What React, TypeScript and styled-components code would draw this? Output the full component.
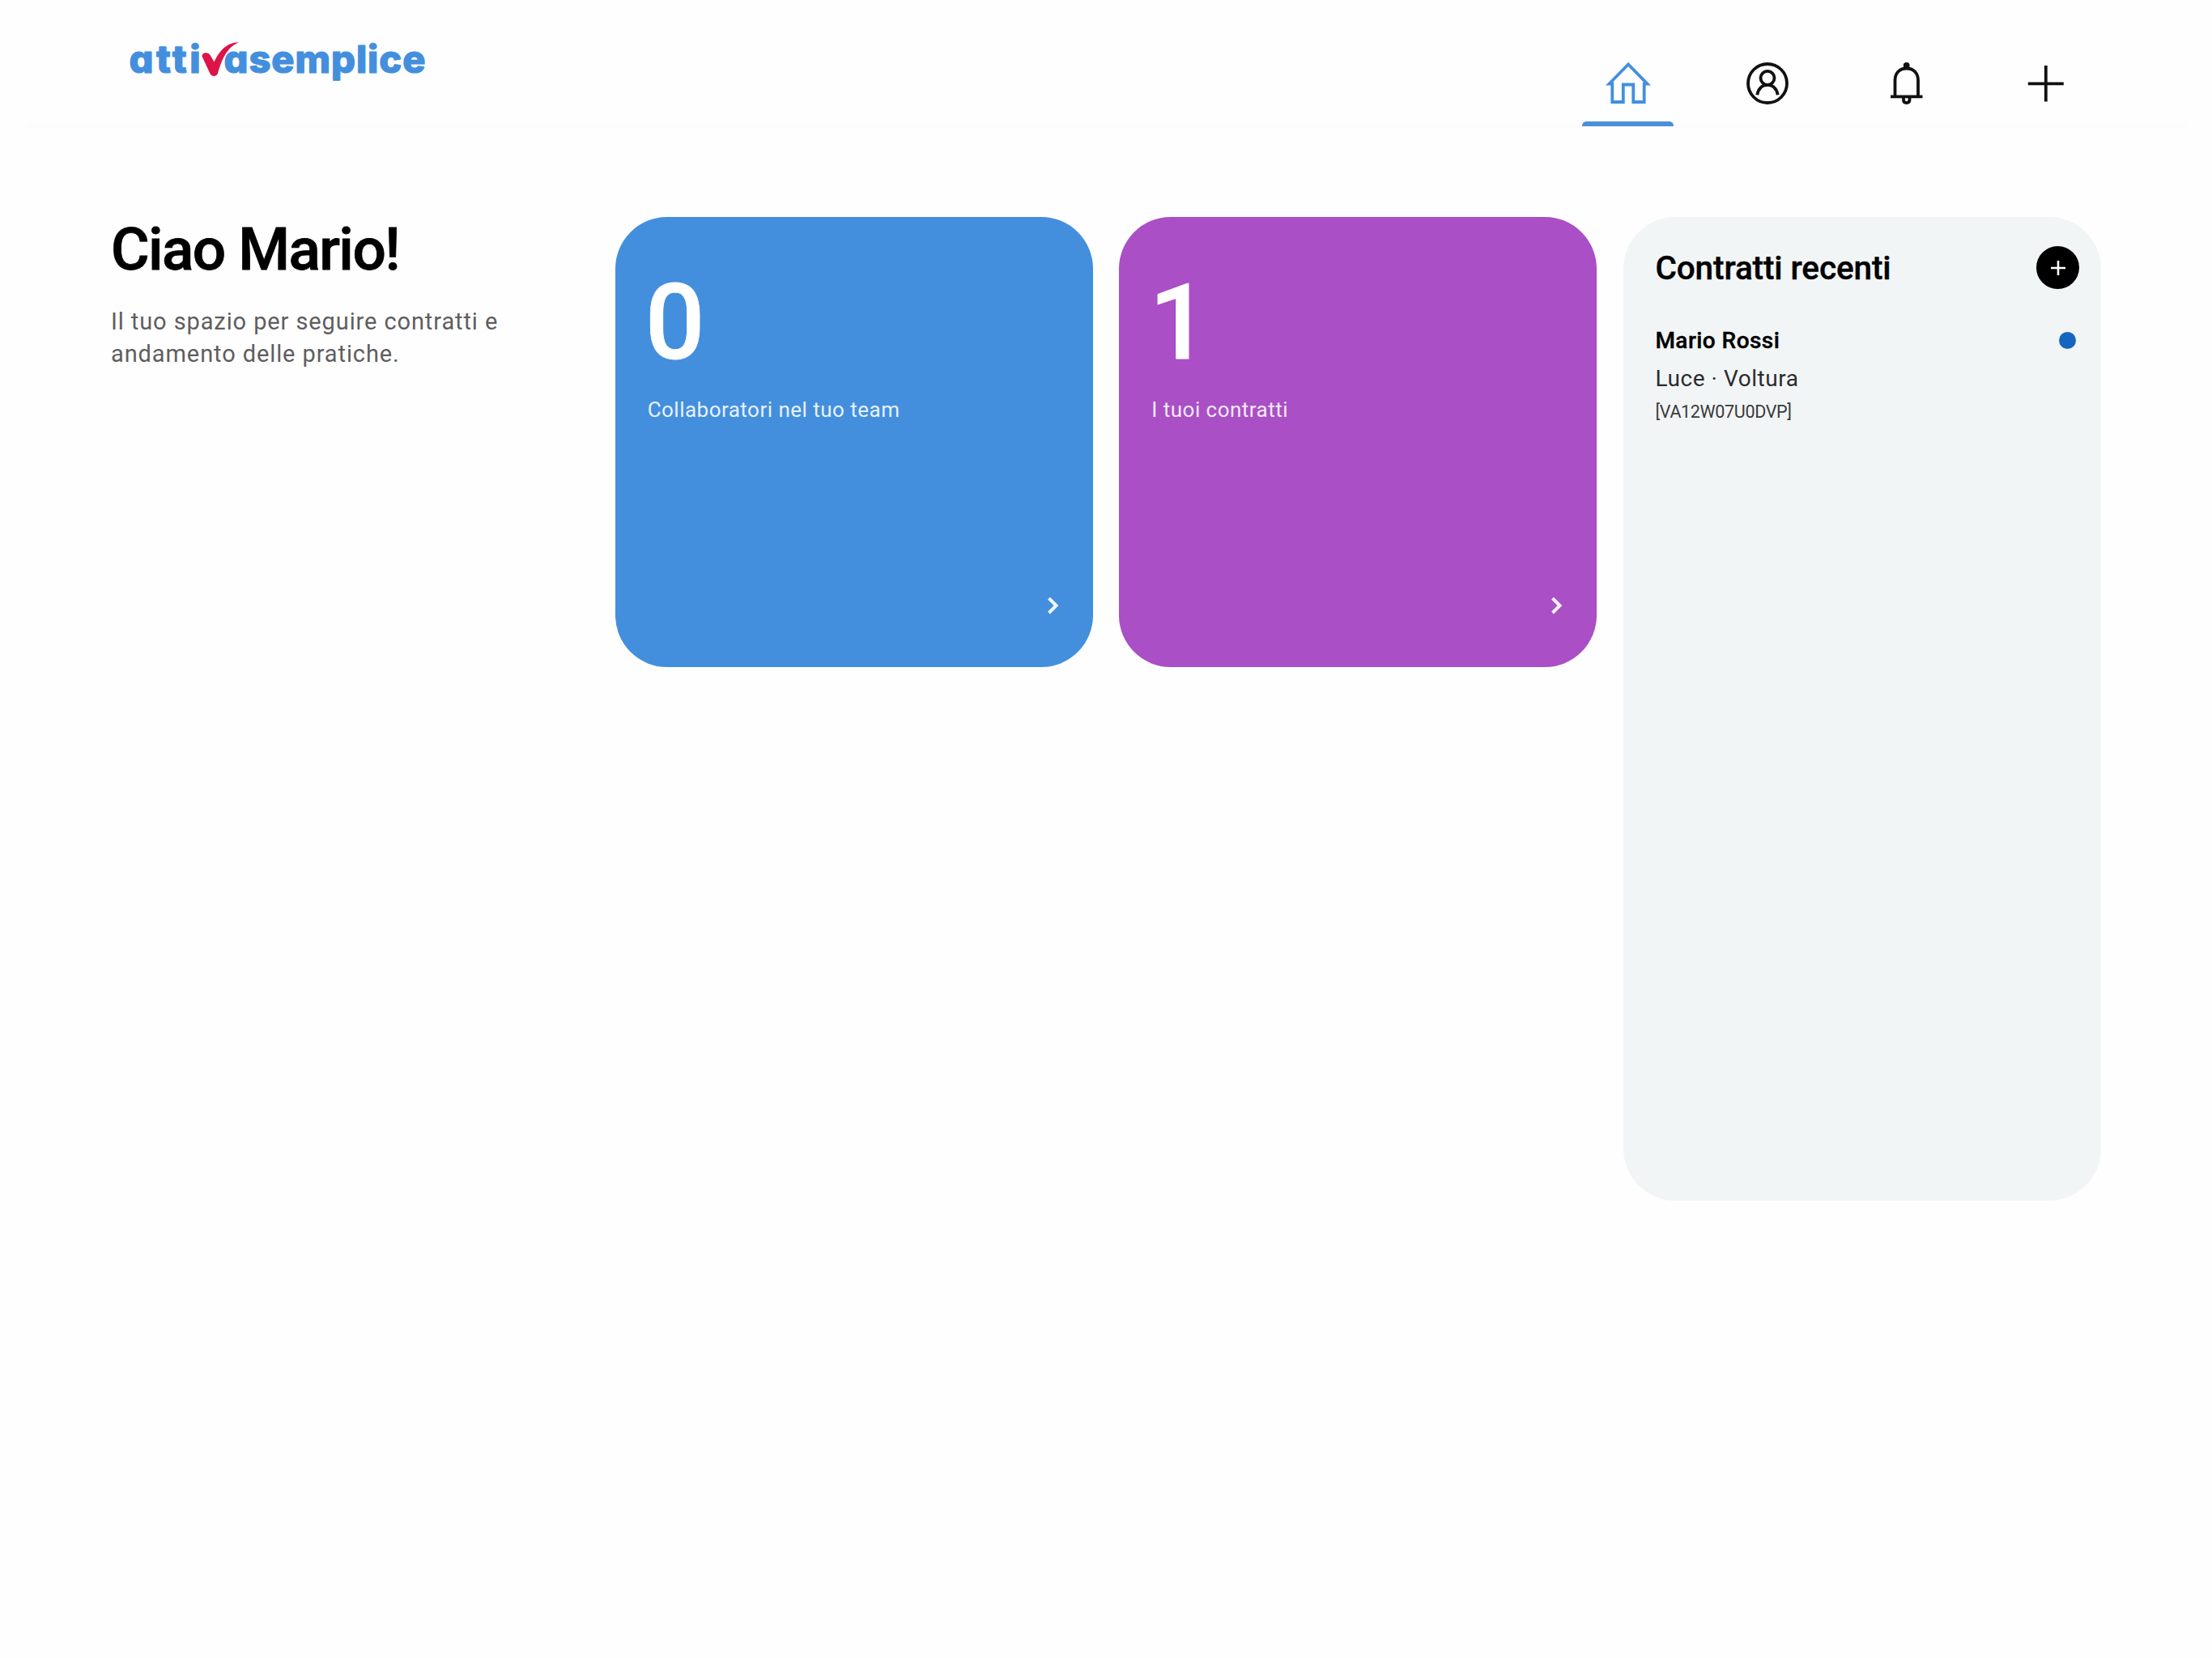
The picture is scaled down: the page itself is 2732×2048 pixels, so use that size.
import React from "react";
import styled, { createGlobalStyle } from "styled-components";

const GlobalStyle = createGlobalStyle`
  *, *::before, *::after { box-sizing: border-box; }
  body {
    margin: 0;
    background: #fefefe;
    color: #000;
    font-family: Roboto, "Liberation Sans", sans-serif;
  }
  h1, h2, p { margin: 0; }
  button { border: 0; padding: 0; background: none; font: inherit; color: inherit; }
`;

const Page = styled.div`
  min-height: 2048px;
  display: flex;
  flex-direction: column;
`;

const Header = styled.header`
  height: 156px;
  padding: 30px 149px 0 140px;
  display: flex;
  justify-content: space-between;
  align-items: flex-start;
  position: relative;
  z-index: 1;
`;

const Divider = styled.div`
  height: 4px;
  margin: -2px 32px 0;
  background: #fcfcfc;
`;

const LogoMark = styled.svg`
  width: 400px;
  height: 90px;
  display: block;
`;

const LogoWord = styled.text`
  font-family: Inter, "Liberation Sans", sans-serif;
  font-feature-settings: "cv11";
  font-size: 47px;
  font-weight: 800;
  fill: #438fde;
  stroke: #438fde;
  stroke-width: 1.2;
  stroke-linejoin: round;
`;

const Nav = styled.nav`
  display: flex;
  gap: 59px;
  padding-top: 40px;
`;

const NavItem = styled.button<{ $active?: boolean }>`
  width: 113px;
  height: 86px;
  display: flex;
  flex-direction: column;
  align-items: center;
  justify-content: space-between;
  color: ${(p) => (p.$active ? "#438fde" : "#111")};

  &::after {
    content: "";
    width: 100%;
    height: 6px;
    border-radius: 6px 6px 1px 1px;
    background: ${(p) => (p.$active ? "#4a90d9" : "transparent")};
  }
`;

const NavIcon = styled.svg`
  width: 64px;
  height: 64px;
  fill: none;
  stroke: currentColor;
  stroke-width: 3.8;
`;

const Main = styled.main`
  display: grid;
  grid-template-columns: repeat(4, 1fr);
  column-gap: 32.6px;
  align-items: start;
  padding: 110px 137px 0;
`;

const Greeting = styled.h1`
  font-size: 73px;
  font-weight: 500;
  line-height: 80px;
  letter-spacing: -1.6px;
  -webkit-text-stroke: 0.8px #000;
`;

const Intro = styled.p`
  margin-top: 29px;
  width: 500px;
  font-size: 29px;
  line-height: 40px;
  letter-spacing: 0.9px;
  color: #5e5e5e;
`;

const StatCard = styled.article<{ $color: string }>`
  height: 556px;
  padding: 66px 30px 56px 40px;
  border-radius: 64px;
  background: ${(p) => p.$color};
  color: #fff;
  display: flex;
  flex-direction: column;
`;

const StatValue = styled.div`
  margin-left: -3px;
  font-size: 130px;
  line-height: 130px;
  font-weight: 500;
  -webkit-text-stroke: 0.8px #fff;
`;

const StatLabel = styled.div`
  margin-top: 24px;
  font-size: 26px;
  line-height: 36px;
  letter-spacing: 0.48px;
  opacity: 0.88;
`;

const Chevron = styled.svg`
  width: 40px;
  height: 40px;
  margin-top: auto;
  align-self: flex-end;
  fill: none;
  stroke: #fff;
  stroke-opacity: 0.92;
  stroke-width: 4;
`;

const Panel = styled.aside`
  height: 1215px;
  padding: 36px 27px 0 39.5px;
  border-radius: 64px;
  background: #f2f5f6;
`;

const PanelHead = styled.div`
  height: 53px;
  display: flex;
  justify-content: space-between;
  align-items: center;
`;

const PanelTitle = styled.h2`
  font-size: 40.5px;
  line-height: 50px;
  font-weight: 500;
  letter-spacing: -0.12px;
  -webkit-text-stroke: 0.4px #000;
`;

const AddButton = styled.button`
  width: 53px;
  height: 53px;
  border-radius: 50%;
  background: #000;
  display: grid;
  place-items: center;
`;

const AddIcon = styled.svg`
  width: 20px;
  height: 20px;
  stroke: #fff;
  stroke-width: 2.6;
`;

const Contract = styled.div`
  margin-top: 46.5px;
`;

const ContractTop = styled.div`
  display: flex;
  justify-content: space-between;
  align-items: center;
  height: 34px;
  padding-right: 4px;
`;

const ContractName = styled.div`
  font-size: 28px;
  line-height: 34px;
  font-weight: 500;
  letter-spacing: 0.45px;
  -webkit-text-stroke: 0.4px #000;
`;

const StatusDot = styled.span`
  width: 21px;
  height: 21px;
  margin-top: -1px;
  border-radius: 50%;
  background: #1565c0;
`;

const ContractKind = styled.div`
  margin-top: 7px;
  font-size: 28px;
  line-height: 46px;
  letter-spacing: 0.55px;
  color: #2b2c2d;
`;

const ContractCode = styled.div`
  font-size: 21.5px;
  line-height: 35px;
  letter-spacing: -0.33px;
  color: #3a3b3c;
`;

const Logo = () => (
  <LogoMark viewBox="0 0 400 90" role="img" aria-label="attivasemplice">
    <LogoWord x="19.5" y="60" textLength="88">
      atti
    </LogoWord>
    <LogoWord x="136.5" y="60" textLength="249">
      asemplice
    </LogoWord>
    <path
      fill="#dc1447"
      d="M109.5 39.5C109.5 34.5 117 34 119.5 38L124.5 46.5C130.5 33.5 140 22 155 22.2C142 28 135.5 38.5 129 60.5C127.5 65 121.5 65 119.5 61Z"
    />
  </LogoMark>
);

const stats = [
  { value: "0", label: "Collaboratori nel tuo team", color: "#438fde" },
  { value: "1", label: "I tuoi contratti", color: "#aa4fc5" },
];

export default function App() {
  return (
    <Page>
      <GlobalStyle />
      <Header>
        <Logo />
        <Nav>
          <NavItem $active aria-label="Home">
            <NavIcon viewBox="0 0 64 64">
              <path d="M32 9.5L8.5 33.5H12.3V56H25.8V34.5H38.3V56H51.7V33.5H55.5Z" />
            </NavIcon>
          </NavItem>
          <NavItem aria-label="Profilo">
            <NavIcon viewBox="0 0 64 64">
              <circle cx="32" cy="33" r="24" />
              <circle cx="32" cy="26.3" r="8.5" />
              <path d="M19.3 47.3C20.5 39.3 25.5 34.8 32 34.8S43.5 39.3 44.7 47.3" />
            </NavIcon>
          </NavItem>
          <NavItem aria-label="Notifiche">
            <NavIcon viewBox="0 0 64 64">
              <path d="M17.5 49V29C17.5 20 23.5 14.5 31.7 14.5S46 20 46 29V49" />
              <path d="M12 49.3H51.5" />
              <path d="M28 50V53.5Q28 57 31.7 57T35.5 53.5V50" />
              <circle cx="31.7" cy="11" r="2" />
            </NavIcon>
          </NavItem>
          <NavItem aria-label="Aggiungi">
            <NavIcon viewBox="0 0 64 64">
              <path d="M31.8 11V55.5M9.8 33.3H53.8" />
            </NavIcon>
          </NavItem>
        </Nav>
      </Header>
      <Divider />
      <Main>
        <section>
          <Greeting>Ciao Mario!</Greeting>
          <Intro>Il tuo spazio per seguire contratti e andamento delle pratiche.</Intro>
        </section>
        {stats.map((s) => (
          <StatCard key={s.label} $color={s.color}>
            <StatValue>{s.value}</StatValue>
            <StatLabel>{s.label}</StatLabel>
            <Chevron viewBox="0 0 40 40">
              <path d="M15.5 11L24.5 20L15.5 29" />
            </Chevron>
          </StatCard>
        ))}
        <Panel>
          <PanelHead>
            <PanelTitle>Contratti recenti</PanelTitle>
            <AddButton aria-label="Nuovo contratto">
              <AddIcon viewBox="0 0 20 20">
                <path d="M10 1V19M1 10H19" />
              </AddIcon>
            </AddButton>
          </PanelHead>
          <Contract>
            <ContractTop>
              <ContractName>Mario Rossi</ContractName>
              <StatusDot />
            </ContractTop>
            <ContractKind>Luce · Voltura</ContractKind>
            <ContractCode>[VA12W07U0DVP]</ContractCode>
          </Contract>
        </Panel>
      </Main>
    </Page>
  );
}
